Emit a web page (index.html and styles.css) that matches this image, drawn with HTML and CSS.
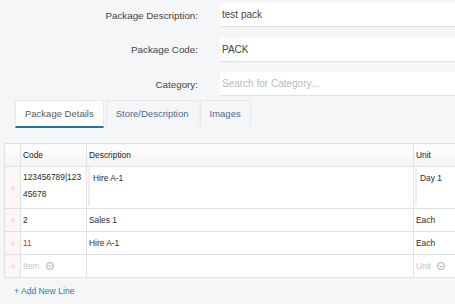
FILE: index.html
```html
<!DOCTYPE html>
<html lang="en">
<head>
    <meta charset="UTF-8">
    <title>Package</title>
    <link rel="stylesheet" href="styles.css">
</head>
<body>
    <div class="page">
        <div class="form">
            <div class="form-row">
                <label>Package Description:</label>
                <div class="field">test pack</div>
            </div>
            <div class="form-row">
                <label>Package Code:</label>
                <div class="field">PACK</div>
            </div>
            <div class="form-row">
                <label>Category:</label>
                <div class="field placeholder">Search for Category...</div>
            </div>
        </div>

        <div class="tabs">
            <div class="tab active">Package Details</div>
            <div class="tab">Store/Description</div>
            <div class="tab">Images</div>
        </div>

        <div class="table-wrap">
            <table class="lines">
                <colgroup>
                    <col class="c-handle">
                    <col class="c-code">
                    <col class="c-desc">
                    <col class="c-unit">
                </colgroup>
                <thead>
                    <tr>
                        <th></th>
                        <th>Code</th>
                        <th>Description</th>
                        <th>Unit</th>
                    </tr>
                </thead>
                <tbody>
                    <tr class="editing">
                        <td class="handle"><span class="grip"></span></td>
                        <td class="wrap">123456789|123<br>45678</td>
                        <td><div class="cell-edit">Hire A-1</div></td>
                        <td><div class="cell-edit">Day 1</div></td>
                    </tr>
                    <tr>
                        <td class="handle"><span class="grip"></span></td>
                        <td>2</td>
                        <td>Sales 1</td>
                        <td>Each</td>
                    </tr>
                    <tr>
                        <td class="handle"><span class="grip"></span></td>
                        <td class="red">11</td>
                        <td>Hire A-1</td>
                        <td>Each</td>
                    </tr>
                    <tr>
                        <td class="handle"><span class="grip"></span></td>
                        <td class="muted">Item
                            <svg class="chev" viewBox="0 0 10 10"><circle cx="5" cy="5" r="4.3"/><path d="M3 4.2 L5 6.2 L7 4.2"/></svg>
                        </td>
                        <td></td>
                        <td class="muted">Unit
                            <svg class="chev" viewBox="0 0 10 10"><circle cx="5" cy="5" r="4.3"/><path d="M3 4.2 L5 6.2 L7 4.2"/></svg>
                        </td>
                    </tr>
                </tbody>
            </table>
        </div>

        <a class="add-line" href="#">+ Add New Line</a>
    </div>
</body>
</html>
```

FILE: styles.css
```css
:root {
    --bg: #f5f6f8;
    --border: #dfe1e4;
    --text: #333;
    --muted: #c4c4c4;
    --teal: #1f7896;
    --link: #2f7aa0;
}

body {
    margin: 0;
    background: var(--bg);
    font-family: "Liberation Sans", Arial, sans-serif;
    color: var(--text);
    overflow: hidden;
}

.page {
    width: 455px;
    padding-top: 3px;
    overflow: hidden;
}

/* header form */
.form {
    display: flex;
    flex-direction: column;
    gap: 10.5px;
}

.form-row {
    display: grid;
    grid-template-columns: 198px 1fr;
    column-gap: 22px;
    align-items: center;
}

.form-row label {
    text-align: right;
    font-size: 9.8px;
    color: #444;
}

.field {
    height: 23px;
    line-height: 23px;
    background: #fff;
    border-bottom: 1px solid var(--border);
    padding-left: 2px;
    font-size: 10px;
    color: #444;
}

.field.placeholder {
    color: #b9b9b9;
}

/* tabs */
.tabs {
    display: flex;
    gap: 2px;
    margin: 4px 0 0 15px;
}

.tab {
    height: 25px;
    line-height: 25px;
    padding: 0 9px;
    font-size: 9.5px;
    color: #4b6a96;
    border: 1px solid #e7e8ea;
    border-bottom: none;
}

.tab.active {
    background: #fff;
    color: #5a5a5a;
    border-bottom: 2px solid var(--teal);
}

.tab:nth-child(3) {
    margin-left: -1px;
}

/* table */
.table-wrap {
    margin: 15px 0 0 4px;
    overflow: hidden;
}

.lines {
    border-collapse: collapse;
    table-layout: fixed;
    width: 520px;
    font-size: 8.4px;
    background: #fff;
}

.c-handle { width: 16px; }
.c-code { width: 66px; }
.c-desc { width: 327px; }
.c-unit { width: 111px; }

.lines th,
.lines td {
    border: 1px solid var(--border);
    padding: 0 2px;
    text-align: left;
    height: 22px;
    color: #2a2a2a;
}

.lines th {
    font-weight: normal;
    background: linear-gradient(#fff, #f3f4f5);
    color: #222;
}

.lines td.handle {
    background: #fdf6f4;
    padding: 0;
    text-align: center;
}

.grip {
    display: inline-block;
    width: 4px;
    height: 5px;
    background: radial-gradient(circle, #d2d2d2 0.6px, transparent 0.8px) 0 0 / 2px 2.5px;
    vertical-align: middle;
}

.editing td {
    height: 39px;
    vertical-align: top;
}

.editing td.handle {
    vertical-align: middle;
}

.editing td.wrap {
    line-height: 17px;
    padding-top: 2px;
}

.editing .cell-edit {
    margin-left: -1px;
    border-left: 2px solid #eeeeee;
    padding: 6px 0 0 3px;
    height: 33px;
}

.red {
    color: #f02424 !important;
}

.muted {
    color: var(--muted) !important;
}

.chev {
    width: 8px;
    height: 8px;
    margin-left: 4px;
    vertical-align: -1px;
    fill: none;
    stroke: #888;
    stroke-width: 0.9;
}

.add-line {
    display: inline-block;
    margin: 8px 0 0 14px;
    font-size: 8.6px;
    color: var(--link);
    text-decoration: none;
}
```
